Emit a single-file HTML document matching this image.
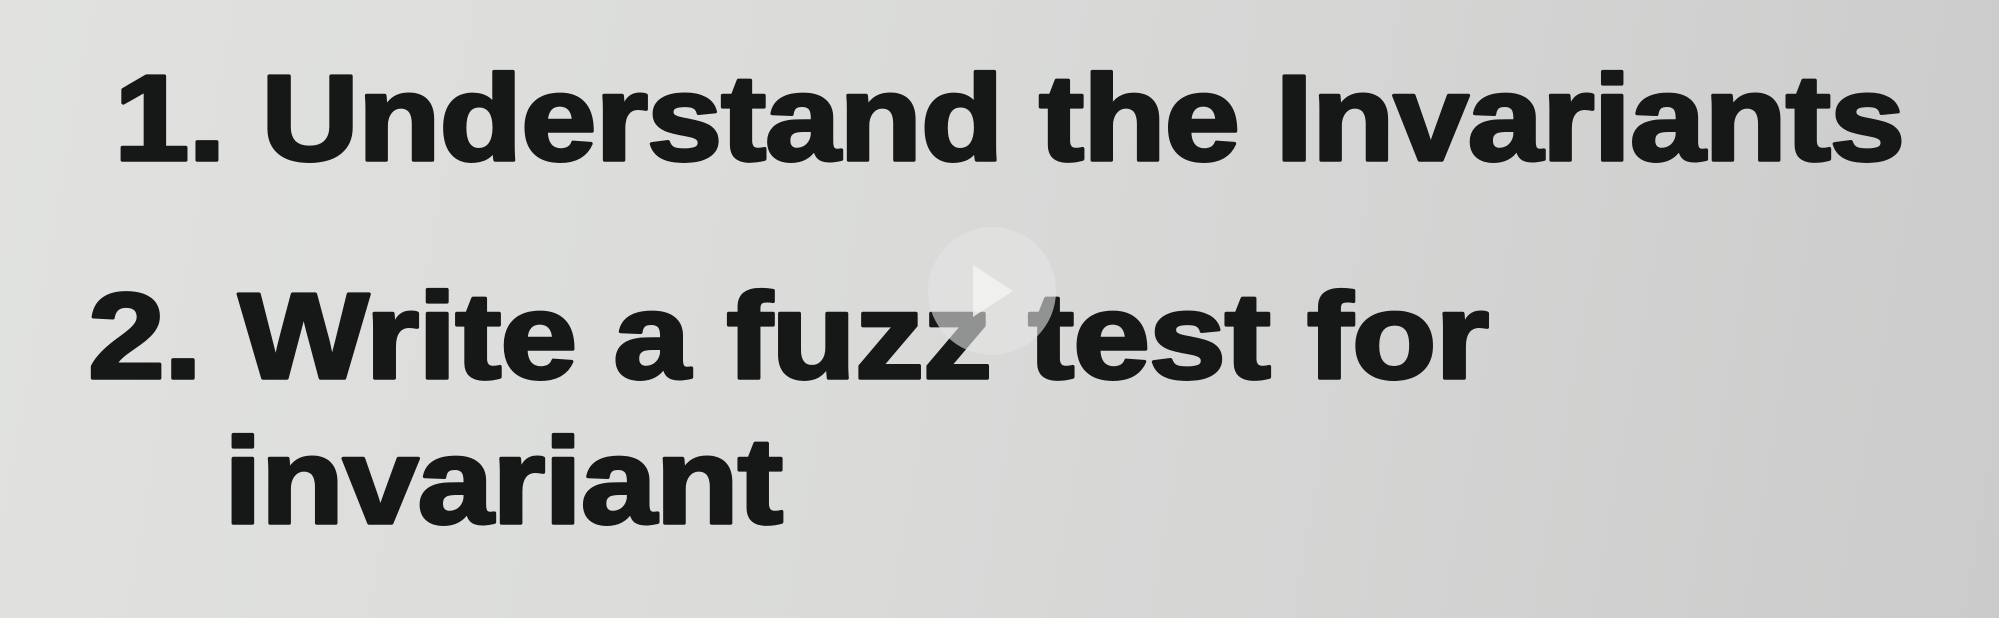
<!DOCTYPE html>
<html><head><style>
html,body{margin:0;padding:0;width:1999px;height:618px;overflow:hidden}
body{background:linear-gradient(100deg,#e1e2e0 0%,#dadbd9 45%,#cbcbcb 100%)}
svg{position:absolute;left:0;top:0}
text{font-family:"Liberation Sans",sans-serif;font-weight:bold;fill:#161818;stroke:#161818;stroke-width:3.5;stroke-linejoin:round;letter-spacing:-1px}
</style></head><body>
<svg width="1999" height="618" viewBox="0 0 1999 618">
<text x="114" y="160" font-size="122" textLength="1790" lengthAdjust="spacingAndGlyphs">1. Understand the Invariants</text>
<text x="88" y="378" font-size="122" textLength="1400" lengthAdjust="spacingAndGlyphs">2. Write a fuzz test for</text>
<text x="224" y="523" font-size="122" textLength="558" lengthAdjust="spacingAndGlyphs">invariant</text>
<circle cx="992" cy="291" r="64" fill="#e4e4e4" fill-opacity="0.6"/>
<path d="M973 265 L1013 291 L973 317 Z" fill="#f2f2f2" fill-opacity="0.85"/>
</svg>
</body></html>
